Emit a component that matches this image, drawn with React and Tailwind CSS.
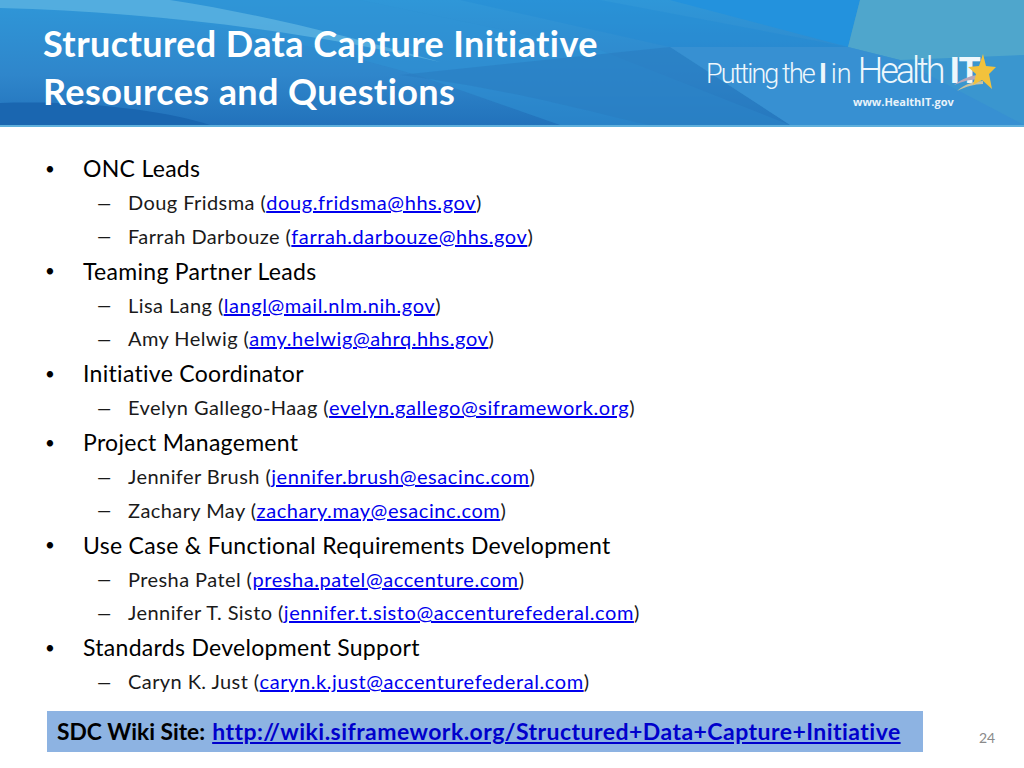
const sections = [
  {
    title: "ONC Leads",
    people: [
      ["Doug Fridsma", "doug.fridsma@hhs.gov"],
      ["Farrah Darbouze", "farrah.darbouze@hhs.gov"],
    ],
  },
  {
    title: "Teaming Partner Leads",
    people: [
      ["Lisa Lang", "langl@mail.nlm.nih.gov"],
      ["Amy Helwig", "amy.helwig@ahrq.hhs.gov"],
    ],
  },
  {
    title: "Initiative Coordinator",
    people: [["Evelyn Gallego-Haag", "evelyn.gallego@siframework.org"]],
  },
  {
    title: "Project Management",
    people: [
      ["Jennifer Brush", "jennifer.brush@esacinc.com"],
      ["Zachary May", "zachary.may@esacinc.com"],
    ],
  },
  {
    title: "Use Case & Functional Requirements Development",
    people: [
      ["Presha Patel", "presha.patel@accenture.com"],
      ["Jennifer T. Sisto", "jennifer.t.sisto@accenturefederal.com"],
    ],
  },
  {
    title: "Standards Development Support",
    people: [["Caryn K. Just", "caryn.k.just@accenturefederal.com"]],
  },
];

const HeaderArt = () => (
  <svg className="absolute inset-0 w-full h-full" viewBox="0 0 1024 125" preserveAspectRatio="none">
    <defs>
      <linearGradient id="base" x1="0" y1="0" x2="0" y2="1">
        <stop offset="0" stopColor="#2f97d8" />
        <stop offset="0.6" stopColor="#2f86cb" />
        <stop offset="1" stopColor="#2272bb" />
      </linearGradient>
    </defs>
    <rect width="1024" height="125" fill="url(#base)" />
    <path d="M0 8 C120 4 260 30 420 76 L560 125 L790 125 L600 50 L360 0 L0 0 Z" fill="#2f93d6" opacity="0.5" />
    <path d="M0 0 L170 0 C260 14 340 34 440 62 C300 30 150 12 0 8 Z" fill="#62b8e2" opacity="0.7" />
    <path d="M0 103 C90 100 170 112 210 125 L0 125 Z" fill="#1a66b0" />
    <path d="M670 0 L860 0 L848 47 Z" fill="#2392dd" />
    <path d="M860 0 L1024 0 L1024 125 L790 125 L670 47 L848 47 Z" fill="#3a96cf" />
    <path d="M860 0 L1024 0 L1024 55 L900 60 L848 47 Z" fill="#4fa6cc" />
    <path d="M670 47 L848 47 L900 60 L1024 125 L790 125 Z" fill="#3790d2" />
    <path d="M400 75 C520 90 620 120 650 125 L790 125 L670 47 Z" fill="#2a7dc2" opacity="0.6" />
    <path d="M460 0 L600 0 L848 47 L670 47 Z" fill="#1f87d4" opacity="0.3" />
  </svg>
);

const Logo = () => (
  <div className="absolute left-[706px] top-[50px] w-[292px] h-[64px] text-[#eef7fc] font-['Roboto',sans-serif]">
    <div className="flex items-baseline h-[42px] leading-[42px] whitespace-nowrap">
      <span className="text-[27px] font-light tracking-[-1.9px]">Putting the</span>
      <span className="text-[27px] font-bold ml-[5px]">I</span>
      <span className="text-[27px] font-light ml-[4px]">in</span>
      <span className="text-[36px] font-light tracking-[-3px] ml-[6px]">Health</span>
      <span className="text-[36px] font-bold tracking-[-1px] ml-[7px]">IT</span>
    </div>
    <svg className="absolute left-[248px] top-[4px]" width="46" height="40" viewBox="0 0 46 40">
      <path d="M0 31 C9 24 18 21 27 21 L27 25 C18 25 9 27 0 31 Z" fill="#b9a7b8" />
      <path d="M3 37 C11 30 20 27 29 27 L29 30 C20 30 11 33 3 37 Z" fill="#c9c3a0" />
      <path d="M29 0 L32 12 L42 13 L35 20 L38 35 L28 26 L19 31 L22 20 L14 13 L25 12 Z" fill="#f2c23c" />
    </svg>
    <div className="absolute left-[147px] top-[44px] text-[11px] leading-4 font-bold text-[#e8f3fa] whitespace-nowrap font-['Open_Sans',sans-serif]">
      www.HealthIT.gov
    </div>
  </div>
);

const App = () => {
  return (
    <div className="w-[1024px] h-[768px] bg-white overflow-hidden font-['Lato',sans-serif] [font-variant-ligatures:none] text-black">
      <header className="relative h-[127px] border-b-2 border-[#5fb0dc]">
        <HeaderArt />
        <h1 className="relative pt-[19px] pl-[43px] text-[36px] tracking-[0.4px] leading-[48px] font-bold text-white">
          Structured Data Capture Initiative
          <br />
          Resources and Questions
        </h1>
        <Logo />
      </header>

      <ul className="pt-[24px] pl-[45px] h-[584px]">
        {sections.map((section) => (
          <li key={section.title}>
            <div className="flex items-center h-[35.2px] text-[23px] tracking-[0.3px]">
              <span className="w-[38px] text-[17px]">•</span>
              <span>{section.title}</span>
            </div>
            {section.people.map(([name, email]) => (
              <div key={email} className="flex items-center h-[33.7px] pb-[2px] pl-[52px] text-[20px] tracking-[0.42px] text-[#1a1a1a]">
                <span className="w-[31px] pt-[2px] text-[18px] tracking-normal">—</span>
                <span>
                  {name} (<a className="text-[#0000ee] tracking-[0.58px] underline">{email}</a>)
                </span>
              </div>
            ))}
          </li>
        ))}
      </ul>

      <div className="flex items-start">
        <div className="flex items-center ml-[47px] w-[876px] h-[41px] pl-[10px] bg-[#8db3e2] font-bold whitespace-nowrap">
          <span className="text-[22.8px]">SDC Wiki Site:</span>
          <a className="ml-[7px] text-[23px] tracking-[0.46px] text-[#0000cc] underline">http://wiki.siframework.org/Structured+Data+Capture+Initiative</a>
        </div>
        <div className="ml-[56px] mt-[19px] text-[14px] leading-4 text-[#8a8a8a]">24</div>
      </div>
    </div>
  );
};

export default App;
